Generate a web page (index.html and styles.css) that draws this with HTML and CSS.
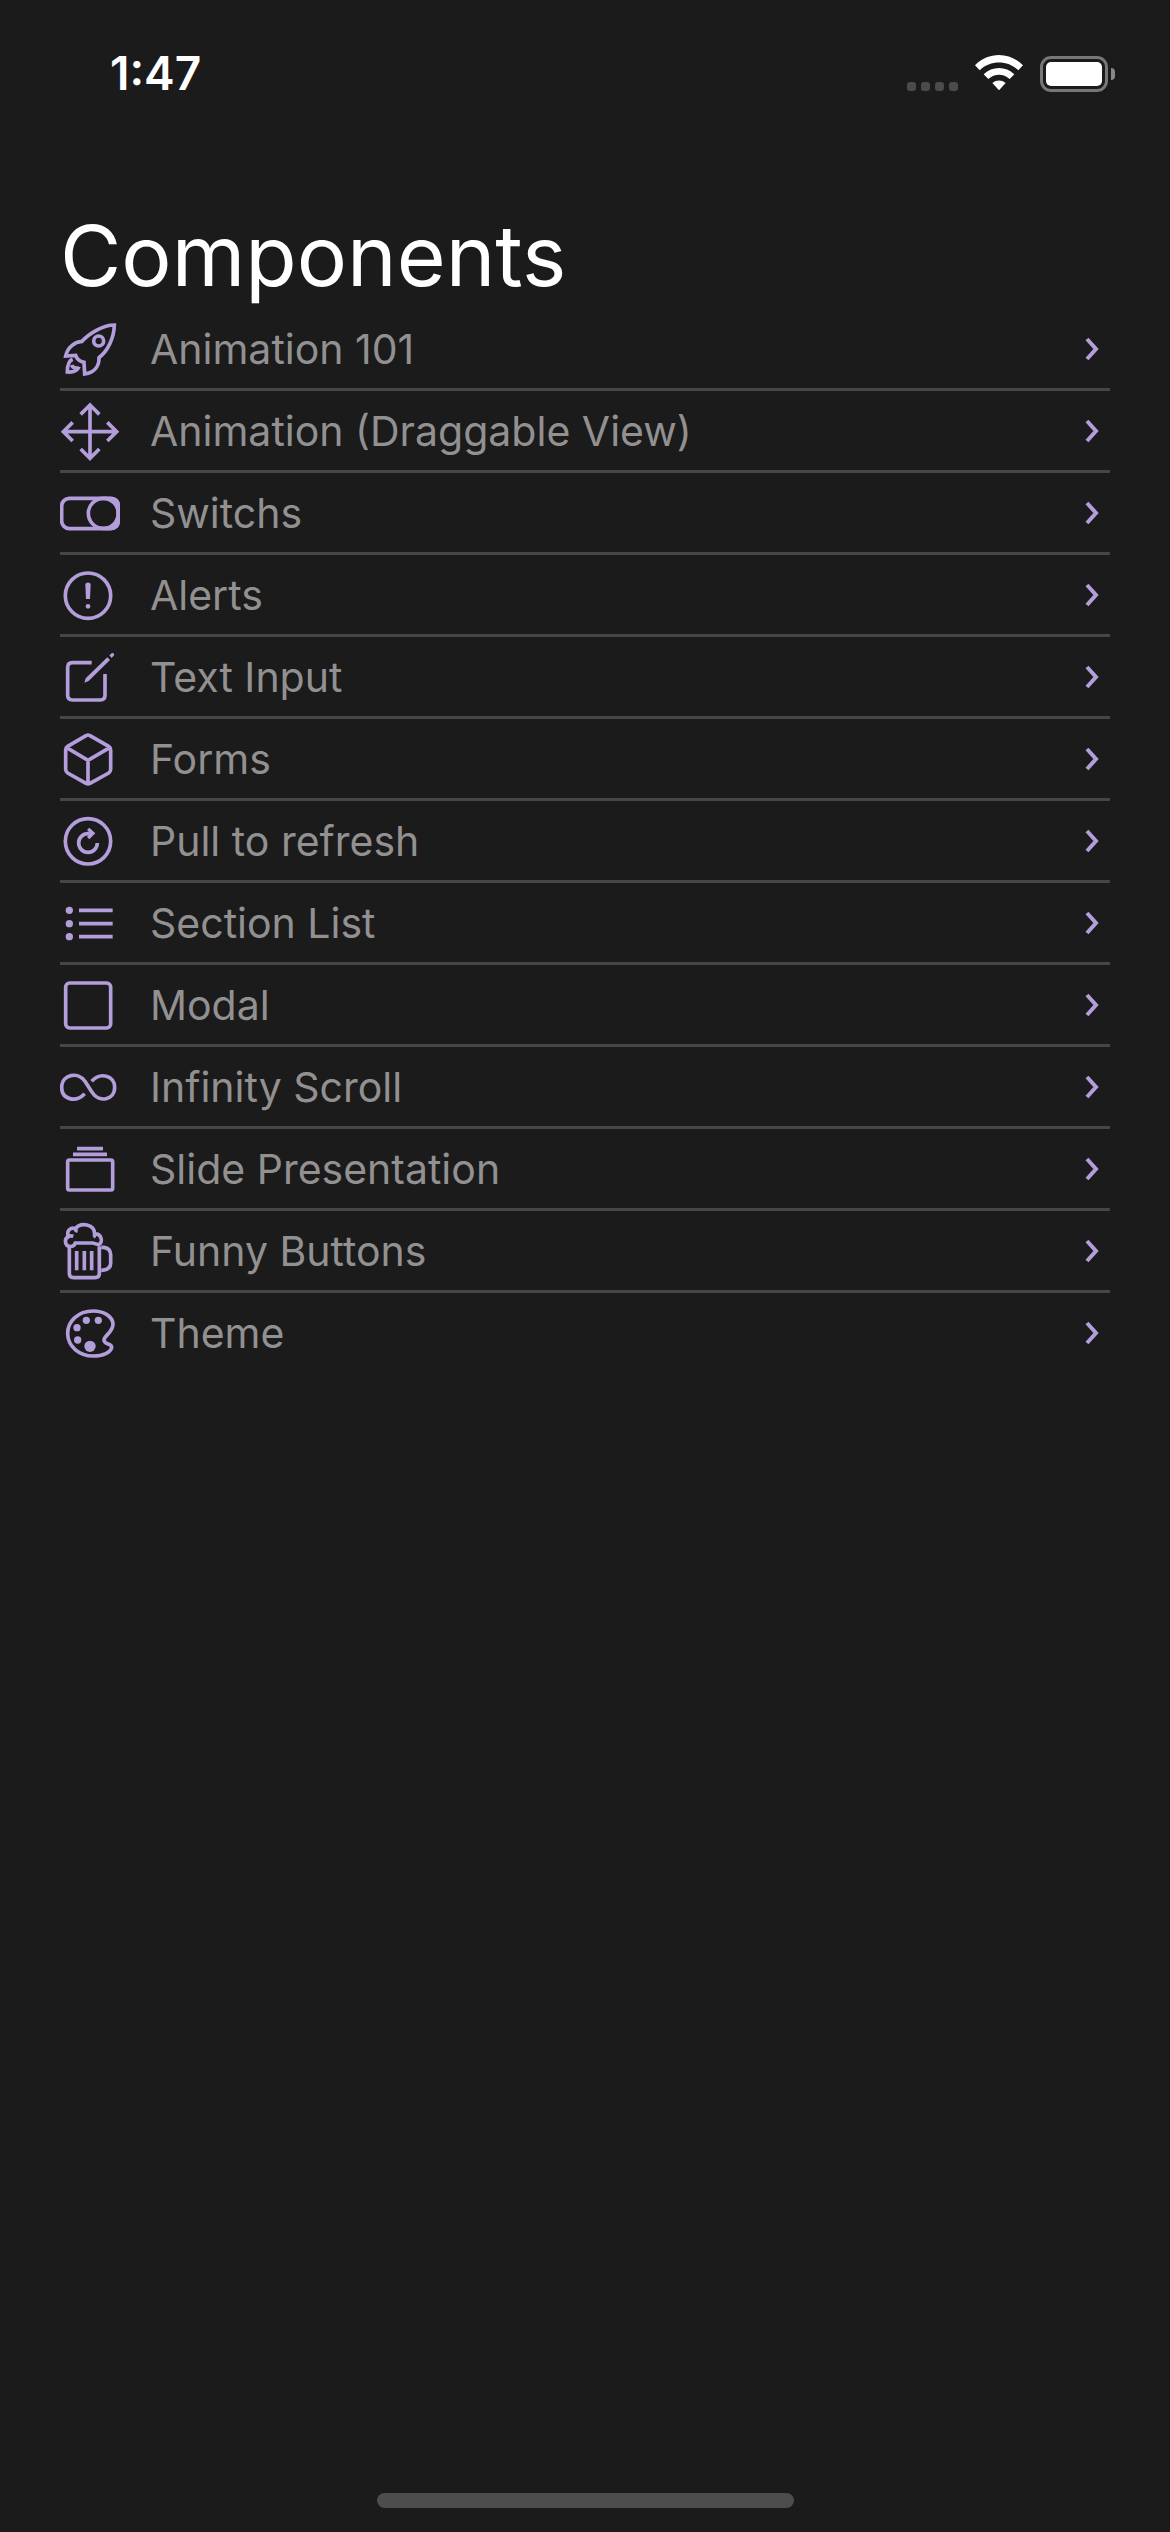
FILE: index.html
```html
<!DOCTYPE html>
<html lang="en">
<head>
<meta charset="utf-8">
<meta name="viewport" content="width=device-width, initial-scale=1">
<title>Components</title>
<link rel="stylesheet" href="styles.css">
</head>
<body>
<header class="status-bar">
  <time class="clock">1:47</time>
  <div class="indicators">
    <span class="signal"><i></i><i></i><i></i><i></i></span>
    <svg class="wifi" viewBox="0 0 150 114" aria-hidden="true"><path d="M3 34C43-7 107-7 147 34L133 49C101 18 49 18 17 49ZM29 61C55 36 95 36 121 61L107 75C88 58 62 58 43 75ZM55 87C67 77 83 77 95 87L75 109Z"/></svg>
    <span class="battery"><span class="battery-body"><span class="battery-level"></span></span><span class="battery-cap"></span></span>
  </div>
</header>
<main class="screen">
  <h1 class="title">Components</h1>
  <nav>
    <ul class="menu">
      <li><a class="row" href="#animation-101">
        <svg class="icon" viewBox="0 0 180 180" aria-hidden="true"><path d="M163 18C130 18 88 42 66 67C45 68 22 85 17 111L47 109Q52 126 72 130L74 165C104 160 118 140 117 116C145 95 162 55 163 18Z"/><circle cx="116" cy="66" r="15"/><path d="M38 121C25 126 22 140 22 159C38 160 52 157 57 143M35 138Q38 148 50 146"/></svg>
        <span class="label">Animation 101</span>
        <svg class="chevron" viewBox="0 0 14 24" aria-hidden="true"><path d="M2 2L11 12L2 22"/></svg></a></li>
      <li><a class="row" href="#draggable">
        <svg class="icon" viewBox="0 0 180 180" aria-hidden="true"><path d="M90 12V172M12 92H170M62 40L90 12L118 40M62 144L90 172L118 144M38 64L10 92L38 120M142 64L170 92L142 120"/></svg>
        <span class="label">Animation (Draggable View)</span>
        <svg class="chevron" viewBox="0 0 14 24" aria-hidden="true"><path d="M2 2L11 12L2 22"/></svg></a></li>
      <li><a class="row" href="#switchs">
        <svg class="icon" viewBox="0 0 180 180" aria-hidden="true"><rect x="5" y="46" width="170" height="91" rx="23"/><circle cx="130" cy="91" r="45"/><path class="solid" d="M130 41H158Q179 45 180 65V118Q178 141 150 142H130C157 139 169 114 169 91C169 67 157 45 130 41Z"/></svg>
        <span class="label">Switchs</span>
        <svg class="chevron" viewBox="0 0 14 24" aria-hidden="true"><path d="M2 2L11 12L2 22"/></svg></a></li>
      <li><a class="row" href="#alerts">
        <svg class="icon" viewBox="0 0 180 180" aria-hidden="true"><circle cx="84" cy="92" r="68"/><path class="solid" d="M76 59C76 50 92 50 92 59L90 102H78Z"/><circle class="solid" cx="84" cy="124" r="7"/></svg>
        <span class="label">Alerts</span>
        <svg class="chevron" viewBox="0 0 14 24" aria-hidden="true"><path d="M2 2L11 12L2 22"/></svg></a></li>
      <li><a class="row" href="#text-input">
        <svg class="icon" viewBox="0 0 180 180" aria-hidden="true"><path d="M95 47H37Q23 47 23 61V145Q23 159 37 159H121Q135 159 135 145V81"/><path class="solid" d="M73 107L77 94L142 31L150 39L86 102ZM148 25L156 18Q162 17 163 24L155 33Z"/></svg>
        <span class="label">Text Input</span>
        <svg class="chevron" viewBox="0 0 14 24" aria-hidden="true"><path d="M2 2L11 12L2 22"/></svg></a></li>
      <li><a class="row" href="#forms">
        <svg class="icon" viewBox="0 0 180 180" aria-hidden="true"><path d="M78 20Q84 16 90 20L146 52Q152 56 152 63V121Q152 128 146 132L90 163Q84 167 78 163L23 132Q17 128 17 121V63Q17 56 23 52ZM20 56L84 94L149 56M84 94V163"/></svg>
        <span class="label">Forms</span>
        <svg class="chevron" viewBox="0 0 14 24" aria-hidden="true"><path d="M2 2L11 12L2 22"/></svg></a></li>
      <li><a class="row" href="#refresh">
        <svg class="icon" viewBox="0 0 180 180" aria-hidden="true"><circle cx="84" cy="91" r="68"/><path d="M112 96A28 28 0 1 1 84 68H94"/><path class="solid" d="M88 50L106 67L88 85L81 78L91 67L81 57Z"/></svg>
        <span class="label">Pull to refresh</span>
        <svg class="chevron" viewBox="0 0 14 24" aria-hidden="true"><path d="M2 2L11 12L2 22"/></svg></a></li>
      <li><a class="row" href="#section-list">
        <svg class="icon" viewBox="0 0 180 180" aria-hidden="true"><path d="M57 52H158M57 92H158M57 131H158"/><g class="solid"><circle cx="28" cy="52" r="11"/><circle cx="28" cy="92" r="11"/><circle cx="28" cy="131" r="11"/></g></svg>
        <span class="label">Section List</span>
        <svg class="chevron" viewBox="0 0 14 24" aria-hidden="true"><path d="M2 2L11 12L2 22"/></svg></a></li>
      <li><a class="row" href="#modal">
        <svg class="icon" viewBox="0 0 180 180" aria-hidden="true"><rect x="17" y="24" width="135" height="135" rx="12"/></svg>
        <span class="label">Modal</span>
        <svg class="chevron" viewBox="0 0 14 24" aria-hidden="true"><path d="M2 2L11 12L2 22"/></svg></a></li>
      <li><a class="row" href="#infinity-scroll">
        <svg class="icon" viewBox="0 0 180 180" aria-hidden="true"><path d="M74 110C46 139 5 127 5 91C5 52 54 42 76 74L95 104C117 139 164 130 164 91C164 54 120 45 95 73"/></svg>
        <span class="label">Infinity Scroll</span>
        <svg class="chevron" viewBox="0 0 14 24" aria-hidden="true"><path d="M2 2L11 12L2 22"/></svg></a></li>
      <li><a class="row" href="#slides">
        <svg class="icon" viewBox="0 0 180 180" aria-hidden="true"><rect x="23" y="63" width="135" height="90" rx="5"/><path d="M39 46H141M51 29H129"/></svg>
        <span class="label">Slide Presentation</span>
        <svg class="chevron" viewBox="0 0 14 24" aria-hidden="true"><path d="M2 2L11 12L2 22"/></svg></a></li>
      <li><a class="row" href="#buttons">
        <svg class="icon" viewBox="0 0 180 180" aria-hidden="true"><path d="M28 76V157Q28 170 41 170H105Q118 170 118 157V76M124 79H132Q152 82 152 102V126Q152 147 124 148M50 90V148M73 90V148M95 90V148"/><path d="M28 76C14 74 12 52 25 47C18 28 34 17 46 23C62 2 104 9 104 39C124 37 131 64 116 71L98 66H46C44 74 36 78 28 76M46 23Q45 29 53 31M25 47Q30 43 40 46M104 39Q105 45 100 48"/></svg>
        <span class="label">Funny Buttons</span>
        <svg class="chevron" viewBox="0 0 14 24" aria-hidden="true"><path d="M2 2L11 12L2 22"/></svg></a></li>
      <li><a class="row" href="#theme">
        <svg class="icon" viewBox="0 0 180 180" aria-hidden="true"><path d="M100 24C52 24 23 57 23 91C23 132 60 159 99 159C130 159 152 148 155 134C157 120 132 126 132 111C132 98 159 88 159 63C157 38 129 24 100 24Z"/><g class="solid"><circle cx="79" cy="52" r="11"/><circle cx="115" cy="52" r="11"/><circle cx="51" cy="74" r="11"/><circle cx="53" cy="111" r="11"/><circle cx="90" cy="130" r="17"/></g></svg>
        <span class="label">Theme</span>
        <svg class="chevron" viewBox="0 0 14 24" aria-hidden="true"><path d="M2 2L11 12L2 22"/></svg></a></li>
    </ul>
  </nav>
</main>
<footer class="home-area"><div class="home-indicator"></div></footer>
</body>
</html>
```

FILE: styles.css
```css
* {
  box-sizing: border-box;
}

body {
  margin: 0;
  min-height: 100vh;
  display: flex;
  flex-direction: column;
  background: #1b1b1b;
  color: #fff;
  font-family: Inter, "Liberation Sans", sans-serif;
}

.status-bar {
  display: flex;
  align-items: center;
  justify-content: space-between;
  padding: 43px 55px 38px 110px;
}

.clock {
  font-size: 46px;
  font-weight: 600;
  line-height: 60px;
}

.indicators {
  display: flex;
  align-items: flex-end;
  gap: 16px;
}

.signal {
  display: flex;
  gap: 5px;
  padding-bottom: 1px;
}

.signal i {
  width: 9px;
  height: 9px;
  border-radius: 3px;
  background: #4b4b4b;
}

.wifi {
  width: 50px;
  height: 38px;
  fill: #fff;
}

.battery {
  display: flex;
  align-items: center;
  gap: 3px;
}

.battery-body {
  width: 68px;
  height: 36px;
  padding: 3px;
  border: 3px solid #777;
  border-radius: 11px;
}

.battery-level {
  display: block;
  height: 100%;
  border-radius: 5px;
  background: #fff;
}

.battery-cap {
  width: 4px;
  height: 12px;
  border-radius: 0 4px 4px 0;
  background: #888;
}

.screen {
  flex: 1;
  padding: 62px 60px 60px;
}

.title {
  margin: 0;
  font-size: 84px;
  font-weight: 400;
  line-height: 106px;
}

.menu {
  margin: 0;
  padding: 0;
  list-style: none;
}

.menu li + li {
  border-top: 3px solid #464646;
}

.row {
  display: flex;
  align-items: center;
  gap: 30px;
  height: 79px;
  padding-right: 11px;
  color: #929090;
  font-size: 41px;
  line-height: 60px;
  text-decoration: none;
}

.label {
  flex: 1;
}

.icon {
  width: 60px;
  height: 60px;
  fill: none;
  stroke: #b39ddb;
  stroke-width: 11;
}

.icon .solid {
  fill: #b39ddb;
  stroke: none;
}

.chevron {
  width: 14px;
  height: 24px;
  fill: none;
  stroke: #b39ddb;
  stroke-width: 4;
}

.home-area {
  display: flex;
  justify-content: center;
  padding-bottom: 24px;
}

.home-indicator {
  width: 417px;
  max-width: 60%;
  height: 15px;
  border-radius: 8px;
  background: #4d4d4d;
}
```
